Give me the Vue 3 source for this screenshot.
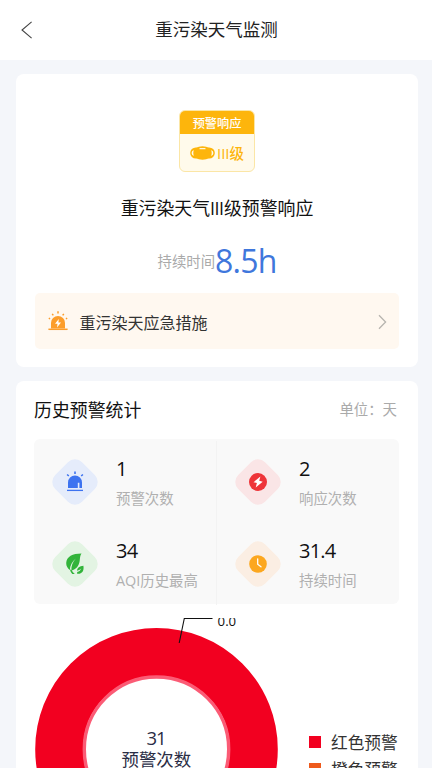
<script setup>
const stats = [
  { icon: 'alarm', value: '1', label: '预警次数', tint: '#e5ecfb' },
  { icon: 'bolt', value: '2', label: '响应次数', tint: '#fae5e6' },
  { icon: 'leaf', value: '34', label: 'AQI历史最高', tint: '#e3f4e3' },
  { icon: 'clock', value: '31.4', label: '持续时间', tint: '#fbeee3' },
]

const legend = [
  { name: '红色预警', color: '#f20020' },
  { name: '橙色预警', color: '#ee5a1c' },
]
</script>

<template>
  <div class="page">
    <header class="topbar">
      <button class="back" aria-label="返回">
        <svg width="12" height="18" viewBox="0 0 12 18"><path d="M10.6 .8 1 9l9.6 8.2" fill="none" stroke="#444" stroke-width="1.1" /></svg>
      </button>
      <h1>重污染天气监测</h1>
    </header>

    <main class="content">
      <section class="card status">
        <div class="badge">
          <div class="badge-head">预警响应</div>
          <div class="badge-body">
            <svg width="25" height="14" viewBox="0 0 25 14">
              <rect x=".2" y="1.4" width="24.600" height="11.200" rx="5.600" fill="#fdb50c" />
              <ellipse cx="12.500" cy="7" rx="9.600" ry="6.800" fill="#fdb50c" />
              <path d="M3.700 3.900Q1.600 4.900 1.600 7t2.100 3.100Q2.800 7 3.700 3.900ZM21.300 3.900q2.100 1 2.100 3.100t-2.100 3.100q.9-3.100 0-6.200Z" fill="#fffaeb" />
              <path d="M10 2.700h5" stroke="#fff8dc" stroke-width="1.200" stroke-linecap="round" />
            </svg>
            <span class="badge-level"><span class="badge-roman">III</span>级</span>
          </div>
        </div>
        <h2>重污染天气<span class="roman">III</span>级预警响应</h2>
        <div class="duration"><span>持续时间</span><strong>8.5h</strong></div>
        <div class="measures">
          <svg width="20" height="20" viewBox="0 0 20 20">
            <path d="M3 17.4V11.7a7 6.700 0 0 1 14 0v5.700Z" fill="#fc9d2b" />
            <path d="M.4 18.3h19.2" stroke="#fc9d2b" stroke-width="1.5" />
            <path d="M.8 7.2l1.3.7M4.2 2.9l1.1 1.5M10 .3v2.1M15.8 2.9l-1.1 1.5M19.2 7.2l-1.3.7" stroke="#fc9d2b" stroke-width="1.5" />
            <path d="M10.8 8 7 12.8h2.5L9 16.4l4-4.9h-2.6Z" fill="#fff" />
          </svg>
          <span class="measures-text">重污染天应急措施</span>
          <svg class="arrow" width="9" height="16" viewBox="0 0 9 16"><path d="M1 1.200 7.600 8 1 14.800" fill="none" stroke="#b7b4af" stroke-width="1.300" /></svg>
        </div>
      </section>

      <section class="card history">
        <div class="history-head"><h3>历史预警统计</h3><span>单位：天</span></div>
        <div class="stats">
          <div v-for="s in stats" :key="s.icon" class="stat">
            <svg width="48" height="48" viewBox="0 0 48 48">
              <rect x="5" y="5" width="38" height="38" rx="10" :fill="s.tint" transform="rotate(45 24 24)" />
              <g v-if="s.icon === 'alarm'">
                <path d="M17 30v-5.5a7 7 0 0 1 14 0V30h-2.600v-5.200h-1.600V30Z" fill="#3d73f0" />
                <path d="M16 32.400h16" stroke="#3d73f0" stroke-width="1.300" />
                <path d="M16.100 16.500l1.700 1.500M24 13.500V16M31.900 16.500l-1.700 1.500" stroke="#3d73f0" stroke-width="1.600" />
              </g>
              <g v-else-if="s.icon === 'bolt'">
                <circle cx="24" cy="24" r="9" fill="#ee3439" />
                <path d="M26.400 18.500 19.500 24.200l3.400.9-1.200 4.400 7-5.800-3.500-.9Z" fill="#fff" />
              </g>
              <g v-else-if="s.icon === 'leaf'">
                <path d="M30.500 13.400C21.500 13.400 15.600 16.500 15.200 23c-.1 3.200 1.500 5.400 3.700 6.900.1-4.500 2.200-8.500 5.900-11.500-3.200 3.800-4.700 7.500-4.400 12 4.700-.7 7.700-4.500 8.300-9.600.3-3.300.4-5.400 1.800-7.400Z" fill="#32b43a" />
                <path d="M32.400 25.800c-3.800.4-6.300 2.200-6.300 5 2.100-.4 3.200-1.200 4.200-2.500-.6 2-1.900 3.200-4.100 3.800l-.1 1.700c4.700.5 7.200-2.400 6.300-8Z" fill="#32b43a" />
                <path d="M18.900 29.500q.6 2.800 2.400 4.500h2.500q-2.500-2-3.200-4Z" fill="#32b43a" />
              </g>
              <g v-else>
                <circle cx="24" cy="24" r="8.800" fill="#fca71f" />
                <path d="M23.700 18.800v5.500l3.300 2.500" fill="none" stroke="#fff" stroke-width="1.300" stroke-linecap="round" />
              </g>
            </svg>
            <div class="stat-text"><b>{{ s.value }}</b><span>{{ s.label }}</span></div>
          </div>
        </div>

        <div class="chart">
          <svg class="donut" width="250" height="260" viewBox="0 0 250 260">
            <circle cx="122.500" cy="131.200" r="97.300" fill="none" stroke="#f20020" stroke-width="48" />
            <circle cx="122.500" cy="131.200" r="72.200" fill="none" stroke="#fb5b75" stroke-width="3.400" />
            <path d="M178.500.5h-28.200L145.200 25" fill="none" stroke="#111" stroke-width="1.100" />
            <text class="callout" x="183.600" y="8.300">0.0</text>
            <text class="total" x="122" y="126.500" text-anchor="middle">31</text>
            <text class="caption" x="122.300" y="148" text-anchor="middle">预警次数</text>
          </svg>
          <ul class="legend">
            <li v-for="l in legend" :key="l.name"><i :style="{ background: l.color }"></i>{{ l.name }}</li>
          </ul>
        </div>
      </section>
    </main>
  </div>
</template>

<style>
body { margin: 0; background: #f4f6fa; }
</style>

<style scoped>
* { box-sizing: border-box; }
.page { height: 768px; overflow: hidden; background: #f4f6fa; font-family: "Open Sans", "Noto Sans CJK SC", sans-serif; color: #111; }
h1, h2, h3 { margin: 0; font-weight: 400; }
.topbar { height: 60px; background: #fff; display: grid; grid-template-columns: 60px 1fr 60px; align-items: center; }
.back { border: 0; background: none; padding: 0 0 0 21px; display: flex; }
h1 { font-size: 17.5px; line-height: 26px; text-align: center; color: #222; white-space: nowrap; padding: 0 0 2px 1px; }
.content { padding: 14px 14px 0 16px; display: flex; flex-direction: column; gap: 14px; }
.card { background: #fff; border-radius: 8px; }
.status { height: 293px; padding: 36px 19px 0; display: flex; flex-direction: column; align-items: center; }
.badge { width: 76px; height: 62px; border: 1px solid #fbe6a6; border-radius: 6px; background: #fffaeb; overflow: hidden; }
.badge-head { height: 24px; margin: -1px -1px 0; background: #fdb50c; color: #fff; font-size: 12.2px; font-weight: 500; line-height: 27px; text-align: center; }
.badge-body { height: 38px; display: flex; align-items: center; justify-content: center; gap: 2px; }
.badge-level { color: #fdb50c; font-size: 14.500px; line-height: 20px; font-weight: 500; white-space: nowrap; }
.badge-roman { font-size: 15px; font-weight: 500; letter-spacing: 0; }
.roman { letter-spacing: -0.6px; margin-right: .6px; }
h2 { margin-top: 22px; font-size: 17.9px; line-height: 26px; padding-top: 1px; height: 26px; white-space: nowrap; }
.duration { margin-top: 18px; height: 46px; display: flex; align-items: center; line-height: 46px; white-space: nowrap; }
.duration span { color: #aaa; font-size: 14.4px; line-height: 47px; height: 46px; }
.duration strong { color: #3f77dc; font-weight: 400; font-size: 32px; letter-spacing: -0.8px; }
.measures { width: 364px; height: 56px; margin-top: 9px; padding: 0 12px 0 13px; border-radius: 5px; background: #fff8f0; display: flex; align-items: center; }
.measures-text { flex: 1; margin-left: 11.5px; font-size: 16px; color: #333; line-height: 24px; padding-top: 3px; }
.arrow { margin-top: 2px; }
.history { height: 460px; padding: 15px 19px 0 18px; }
.history-head { height: 26px; display: flex; justify-content: space-between; align-items: center; padding-right: 2px; }
h3 { font-size: 17.9px; line-height: 26px; padding-top: 2px; }
.history-head span { font-size: 14.4px; color: #aaa; line-height: 24px; padding-top: 2px; }
.stats { margin-top: 17px; height: 165px; border-radius: 6px; background: #f9f9f9; display: grid; grid-template-columns: 183px 1fr; grid-template-rows: 82px 82px; padding-top: 2px; }
.stat { display: flex; align-items: center; padding-left: 17px; gap: 17px; }
.stat:nth-child(odd) { border-right: 1px solid #f3f3f3; }
.stat-text { display: flex; flex-direction: column; gap: 4px; padding-top: 2px; white-space: nowrap; }
.stat b { font-weight: 400; font-size: 20px; line-height: 28px; letter-spacing: -0.8px; }
.stat span { font-size: 14.4px; line-height: 24px; color: #b0b0b0; }
.chart { margin-top: 14px; height: 260px; display: flex; overflow: hidden; }
.donut { flex: none; }
.callout { font-size: 13.2px; fill: #111; }
.total { font-size: 18.5px; letter-spacing: -1.2px; fill: #2a2d45; }
.caption { font-size: 17.4px; fill: #2a2d45; }
.legend { list-style: none; margin: 111px 0 0 25px; padding: 0; }
.legend li { height: 26.7px; display: flex; align-items: center; gap: 10px; font-size: 16.7px; color: #333; white-space: nowrap; }
.legend i { width: 12px; height: 12px; }
</style>
